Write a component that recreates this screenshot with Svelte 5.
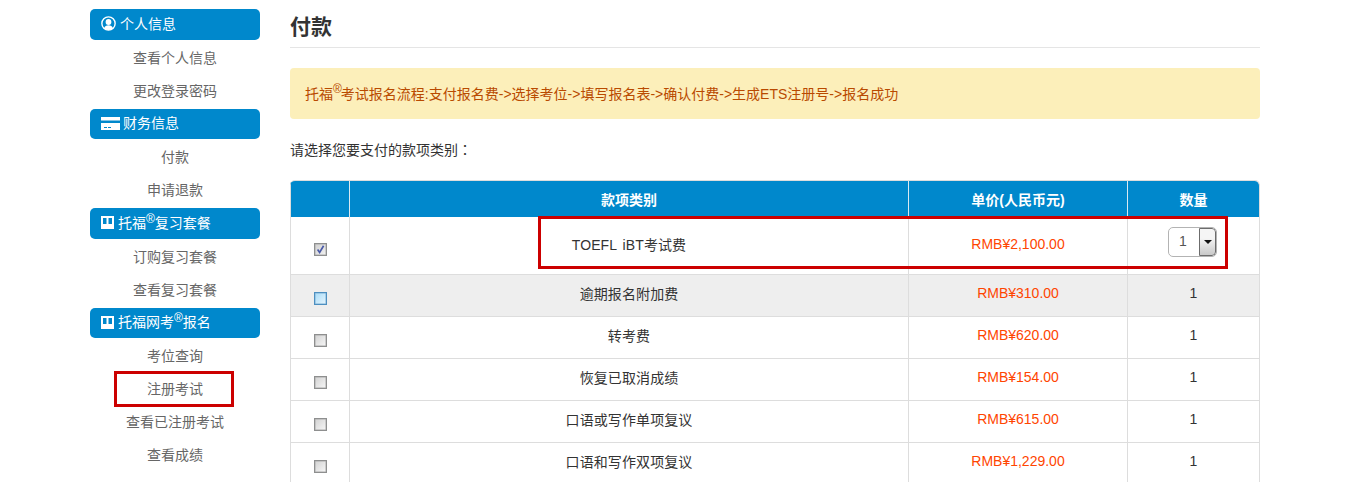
<script>
  const sections = [
    { icon: 'user', label: '个人信息', links: ['查看个人信息', '更改登录密码'] },
    { icon: 'card', label: '财务信息', links: ['付款', '申请退款'] },
    { icon: 'board', label: '托福', sup: '®', rest: '复习套餐', links: ['订购复习套餐', '查看复习套餐'] },
    { icon: 'board', label: '托福网考', sup: '®', rest: '报名', links: ['考位查询', '注册考试', '查看已注册考试', '查看成绩'] }
  ];
  const rows = [
    { name: 'TOEFL iBT考试费', price: 'RMB¥2,100.00', check: 'checked', select: true },
    { name: '逾期报名附加费', price: 'RMB¥310.00', check: 'hover', alt: true },
    { name: '转考费', price: 'RMB¥620.00', check: '' },
    { name: '恢复已取消成绩', price: 'RMB¥154.00', check: '' },
    { name: '口语或写作单项复议', price: 'RMB¥615.00', check: '' },
    { name: '口语和写作双项复议', price: 'RMB¥1,229.00', check: '' }
  ];
</script>

<div class="page">
  <aside class="side">
    {#each sections as s}
      <div class="pill">
        {#if s.icon === 'user'}
          <svg class="ic" width="15" height="15" viewBox="0 0 14 14"><circle cx="7" cy="7" r="6.2" fill="none" stroke="#fff" stroke-width="1.3"/><circle cx="7" cy="5.6" r="2.7" fill="#fff"/><path d="M2.8 11.4C3.4 9.4 5 8.6 7 8.6s3.6.8 4.2 2.8A6 6 0 0 1 2.8 11.4z" fill="#fff"/></svg>
        {:else if s.icon === 'card'}
          <svg class="ic card" width="19" height="13" viewBox="0 0 19 13"><path d="M0 0h19v3.5H0z" fill="#fff"/><path d="M0 6h19v7H0z" fill="#fff"/><path d="M3 10.5h3M7 10.5h3" stroke="#0088cc" stroke-width="1"/></svg>
        {:else}
          <svg class="ic" width="13" height="13" viewBox="0 0 13 13"><path fill-rule="evenodd" d="M0 0h13v13H0zM2 2v6h3.5V2zM7.5 2v6H11V2z" fill="#fff"/></svg>
        {/if}
        <span>{s.label}{#if s.sup}<sup>{s.sup}</sup>{s.rest}{/if}</span>
      </div>
      <ul class="links">
        {#each s.links as l}
          <li class:flag={l === '注册考试'}>{l}</li>
        {/each}
      </ul>
    {/each}
  </aside>

  <main class="main">
    <h1>付款</h1>
    <div class="alert">托福<sup>®</sup>考试报名流程:支付报名费-&gt;选择考位-&gt;填写报名表-&gt;确认付费-&gt;生成ETS注册号-&gt;报名成功</div>
    <p class="prompt">请选择您要支付的款项类别<span class="colon">：</span></p>

    <div class="table-wrap">
      <div class="mark"></div>
      <table>
        <colgroup><col class="c1" /><col class="c2" /><col class="c3" /><col class="c4" /></colgroup>
        <thead>
          <tr><th></th><th>款项类别</th><th>单价(人民币元)</th><th>数量</th></tr>
        </thead>
        <tbody>
          {#each rows as r, i}
            <tr class:alt={r.alt} class:first={i === 0}>
              <td class="chk"><span class="box {r.check}">
                {#if r.check === 'checked'}
                  <svg width="9" height="9" viewBox="0 0 9 9"><path d="M1.6 4.6 3.6 7.4 7.6 0.8" fill="none" stroke="#4a5aa8" stroke-width="1.7"/></svg>
                {/if}
              </span></td>
              <td class="name">{r.name}</td>
              <td class="price">{r.price}</td>
              <td class="qty">
                {#if r.select}
                  <span class="select"><span class="val">1</span><span class="btn"><i></i></span></span>
                {:else}1{/if}
              </td>
            </tr>
          {/each}
        </tbody>
      </table>
    </div>
  </main>
</div>

<style>
  :global(body) { margin: 0; background: #fff; overflow: hidden; }
  .page {
    display: flex;
    gap: 30px;
    height: 482px;
    overflow: hidden;
    padding: 9px 0 0 90px;
    box-sizing: border-box;
    font-family: "Liberation Sans", "Noto Sans CJK SC", sans-serif;
    font-size: 14px;
    color: #333;
  }
  .side { width: 170px; flex: none; }
  .pill {
    height: 30.5px;
    background: #0088cc;
    border-radius: 5px;
    color: #fff;
    display: flex;
    align-items: center;
    gap: 4px;
    padding: 0 0 1px 11px;
    box-sizing: border-box;
    line-height: 20px;
  }
  .pill sup { font-size: 12px; line-height: 0; vertical-align: 5px; }
  .ic { flex: none; }
  .card { margin-right: -1px; }
  .links { list-style: none; margin: 0; padding: 2px 0 1px; }
  .links li {
    height: 33px;
    line-height: 33px;
    text-align: center;
    color: #666;
    position: relative;
  }
  .flag::after {
    content: "";
    position: absolute;
    left: 24px;
    top: -2px;
    width: 120px;
    height: 36px;
    box-sizing: border-box;
    border: 3px solid #cc0000;
  }
  .main { width: 970px; flex: none; position: relative; }
  h1 {
    margin: 0;
    height: 39px;
    font-size: 21px;
    line-height: 36px;
    font-weight: bold;
    color: #333;
    border-bottom: 1px solid #e5e5e5;
    box-sizing: border-box;
  }
  .alert {
    margin-top: 20px;
    height: 51px;
    line-height: 53px;
    padding-left: 15px;
    background: #fcefba;
    border-radius: 4px;
    color: #b94a00;
    box-sizing: border-box;
  }
  .alert sup { font-size: 12px; line-height: 0; vertical-align: 6px; margin-right: -1px; }
  .prompt { margin: 21px 0 0; height: 20px; line-height: 20px; color: #333; }
  .colon { font-family: "Noto Sans CJK TC", sans-serif; line-height: 0; }
  .table-wrap { margin-top: 20px; position: relative; }
  .mark {
    position: absolute;
    left: 248px;
    top: 36px;
    width: 690px;
    height: 53px;
    box-sizing: border-box;
    border: 3px solid #cc0000;
    z-index: 2;
  }
  table {
    width: 970px;
    border-collapse: separate;
    border-spacing: 0;
    table-layout: fixed;
    border-top: 1px solid #ddd;
    border-radius: 5px 5px 0 0;
    overflow: hidden;
  }
  .c1 { width: 59px; }
  .c2 { width: 559px; }
  .c3 { width: 219px; }
  .c4 { width: 133px; }
  th {
    height: 36px;
    padding: 0;
    background: #0088cc;
    color: #fff;
    font-weight: bold;
    font-size: 14px;
    text-align: center;
    border-left: 1px solid #d9e9f2;
    box-sizing: border-box;
  }
  th:first-child { border-left-color: #ddd; }
  th:last-child { border-right: 1px solid #ddd; border-top-right-radius: 5px; }
  td {
    height: 42px;
    padding: 0 0 6px;
    text-align: center;
    border-left: 1px solid #ddd;
    border-bottom: 1px solid #ddd;
    box-sizing: border-box;
    color: #333;
    vertical-align: middle;
  }
  td:last-child { border-right: 1px solid #ddd; }
  .first td { height: 58px; padding-bottom: 4px; }
  .alt td { background: #eeeeee; }
  .price { color: #ff4500; }
  .name { word-spacing: 2px; letter-spacing: 0.1px; }
  td.chk { padding: 4px 0 0; }
  .first td.chk { padding: 6px 0 0; }
  .box {
    display: inline-flex;
    align-items: center;
    justify-content: center;
    width: 13px;
    height: 13px;
    box-sizing: border-box;
    border: 1px solid #8e8f8f;
    box-shadow: inset 0 0 0 0.5px #aaa;
    background: linear-gradient(135deg, #d2d2d2, #f7f7f7);
    vertical-align: middle;
  }
  .box.hover { border-color: #4d8fc0; box-shadow: inset 0 0 0 0.5px #7fb0d4; background: linear-gradient(135deg, #a9dcf8, #e6f5fd); }
  .box.checked { background: linear-gradient(135deg, #d0d0d0, #f2f2f2); }
  .select {
    display: inline-flex;
    width: 49px;
    height: 30px;
    box-sizing: border-box;
    border: 1px solid #b3b3b3;
    border-radius: 5px;
    overflow: hidden;
    background: #fff;
    vertical-align: middle;
    position: relative;
    left: -1px;
    top: -2px;
  }
  .val { flex: 1; text-align: left; padding-left: 10px; line-height: 26px; color: #555; }
  .btn {
    width: 17px;
    box-sizing: border-box;
    border: 1.5px solid #6c6c6c;
    border-top-width: 1px;
    border-radius: 0 4px 4px 0;
    background: linear-gradient(#f5f5f5 35%, #c9c9c9);
    display: flex;
    align-items: center;
    justify-content: center;
  }
  .btn i {
    width: 0;
    height: 0;
    border-left: 4px solid transparent;
    border-right: 4px solid transparent;
    border-top: 4px solid #111;
  }
</style>
